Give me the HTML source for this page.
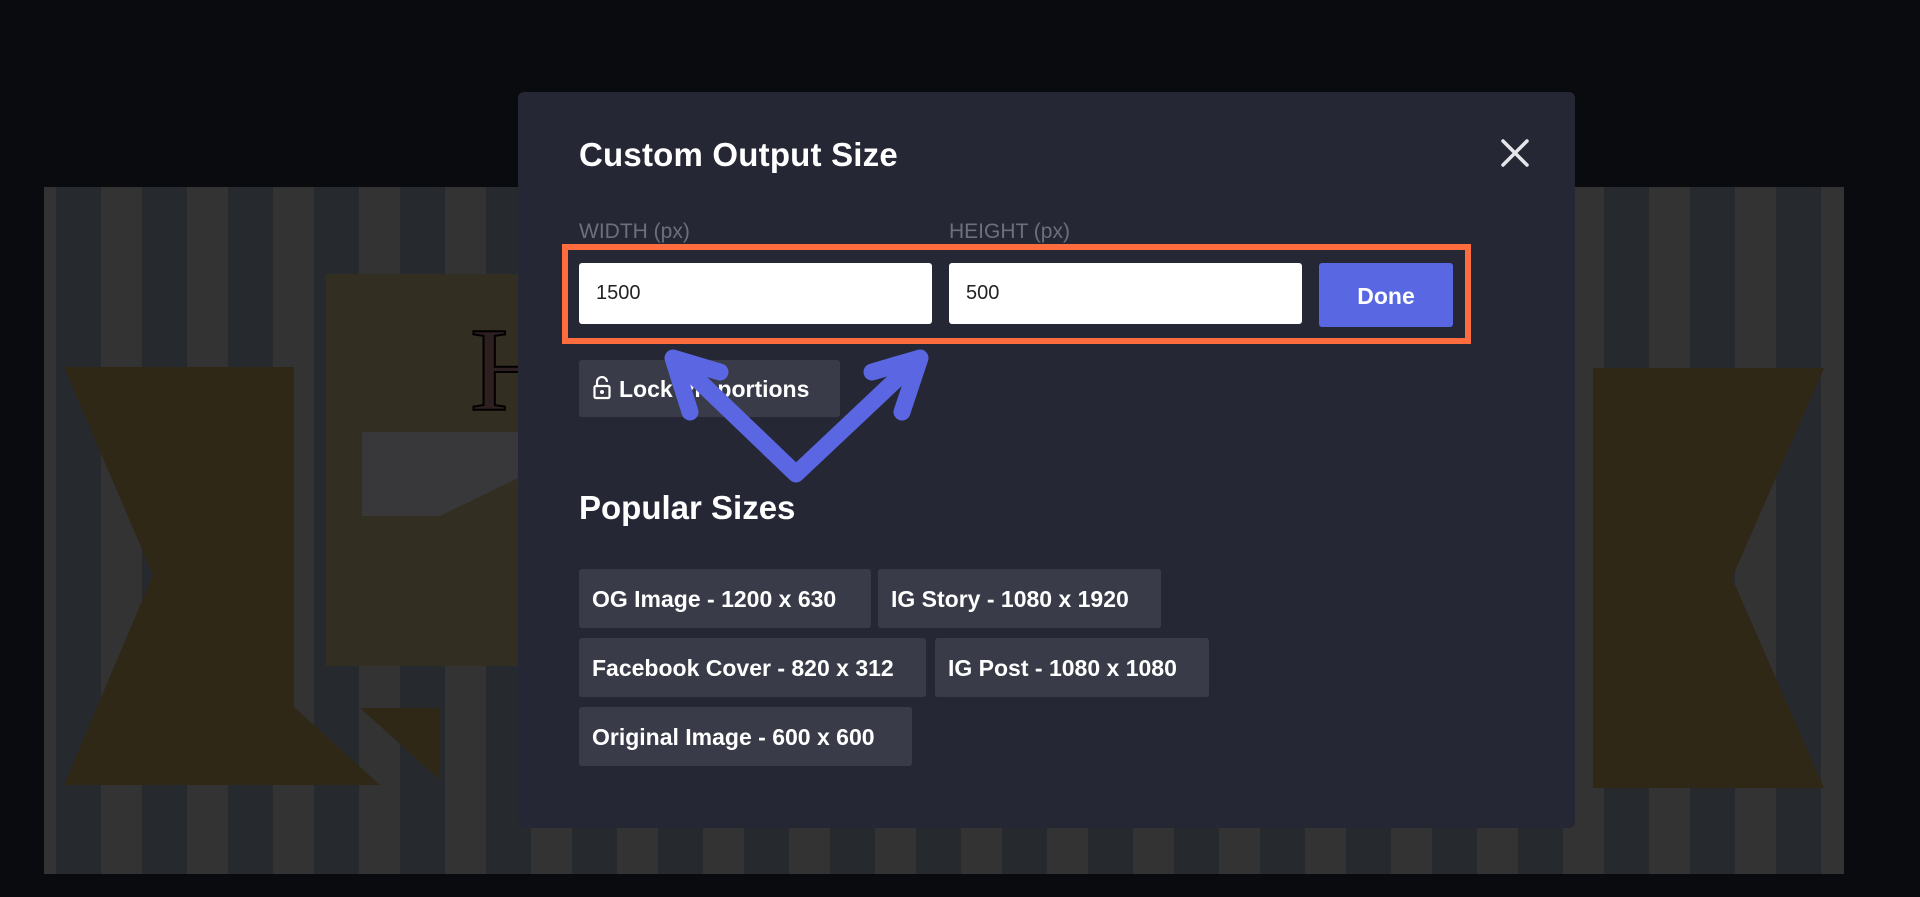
<!DOCTYPE html>
<html><head><meta charset="utf-8"><style>
*{margin:0;padding:0;box-sizing:border-box}
body{width:1920px;height:897px;background:#0a0b0e;position:relative;overflow:hidden;font-family:"Liberation Sans",sans-serif}
.canvas{position:absolute;left:44px;top:187px;width:1800px;height:687px;background:repeating-linear-gradient(90deg,#333333 0 12px,#262a2e 12px 57px,#333333 57px 86px)}
.modal{position:absolute;left:518px;top:92px;width:1057px;height:736px;background:#252735;border-radius:6px}
.abs{position:absolute}
.title{left:61px;top:44px;font-size:33px;font-weight:bold;color:#fff;letter-spacing:0.2px}
.lbl{top:128px;font-size:21px;color:#6c6f7c}
.inp{top:171px;height:61px;width:353px;background:#fff;border-radius:3px;font-size:20px;color:#222;padding:19px 0 0 17px}
.done{left:801px;top:171px;width:134px;height:64px;background:#5967e3;border-radius:3px;color:#fff;font-size:23px;font-weight:bold;text-align:center;line-height:66px}
.orange{left:44px;top:152px;width:909px;height:100px;border:6px solid #ff6c3e}
.chip{height:59px;background:#393c48;border-radius:3px;color:#fff;font-size:23px;font-weight:bold;line-height:60px;padding-left:13px;white-space:nowrap}
</style></head><body>
<div class="canvas"></div>
<svg class="abs" style="left:0;top:0" width="1920" height="897">
<rect x="326" y="274" width="192" height="392" fill="#332e22"/>
<polygon points="64,367 294,367 294,707 380,785 64,785 153,575" fill="#302816"/>
<polygon points="362,432 518,432 518,478 440,516 362,516" fill="#38383a"/>
<polygon points="360,708 440,708 440,780" fill="#302816"/>
<text x="470" y="410" font-family="Liberation Serif" font-size="120" fill="#2e2020" stroke="#000" stroke-width="2">H</text>
<polygon points="1593,368 1824,368 1732,578 1824,788 1593,788" fill="#302816"/>
</svg>
<div class="modal">
<div class="abs title">Custom Output Size</div>
<svg class="abs" style="left:982px;top:46px" width="30" height="30"><path d="M3 3L27 27M27 3L3 27" stroke="#e6e6ea" stroke-width="3.5" stroke-linecap="round"/></svg>
<div class="abs lbl" style="left:61px">WIDTH (px)</div>
<div class="abs lbl" style="left:431px">HEIGHT (px)</div>
<div class="abs orange"></div>
<div class="abs inp" style="left:61px">1500</div>
<div class="abs inp" style="left:431px">500</div>
<div class="abs done">Done</div>
<div class="abs chip" style="left:61px;top:268px;width:261px;height:57px;line-height:59px;padding-left:14px">
<svg style="vertical-align:-3px;margin-right:8px" width="18" height="24" viewBox="0 0 18 24"><path d="M4 10V6a5 5 0 0 1 10 0" fill="none" stroke="#fff" stroke-width="2.2"/><rect x="1.5" y="10" width="15" height="12" rx="1.5" fill="none" stroke="#fff" stroke-width="2.2"/><circle cx="9" cy="16" r="2" fill="#fff"/></svg>Lock Proportions</div>
<div class="abs" style="left:61px;top:397px;font-size:33px;font-weight:bold;color:#fff">Popular Sizes</div>
<div class="abs chip" style="left:61px;top:477px;width:292px">OG Image - 1200 x 630</div>
<div class="abs chip" style="left:360px;top:477px;width:283px">IG Story - 1080 x 1920</div>
<div class="abs chip" style="left:61px;top:546px;width:347px">Facebook Cover - 820 x 312</div>
<div class="abs chip" style="left:417px;top:546px;width:274px">IG Post - 1080 x 1080</div>
<div class="abs chip" style="left:61px;top:615px;width:333px">Original Image - 600 x 600</div>
</div>
<svg class="abs" style="left:0;top:0" width="1920" height="897">
<g stroke="#5b66e2" stroke-width="17" stroke-linecap="round" stroke-linejoin="round" fill="none">
<polyline points="676,359 796,474 918,359"/>
<polyline points="690,412 673,358 720,372"/>
<polyline points="902,412 920,358 872,372"/>
</g>
</svg>
</body></html>
